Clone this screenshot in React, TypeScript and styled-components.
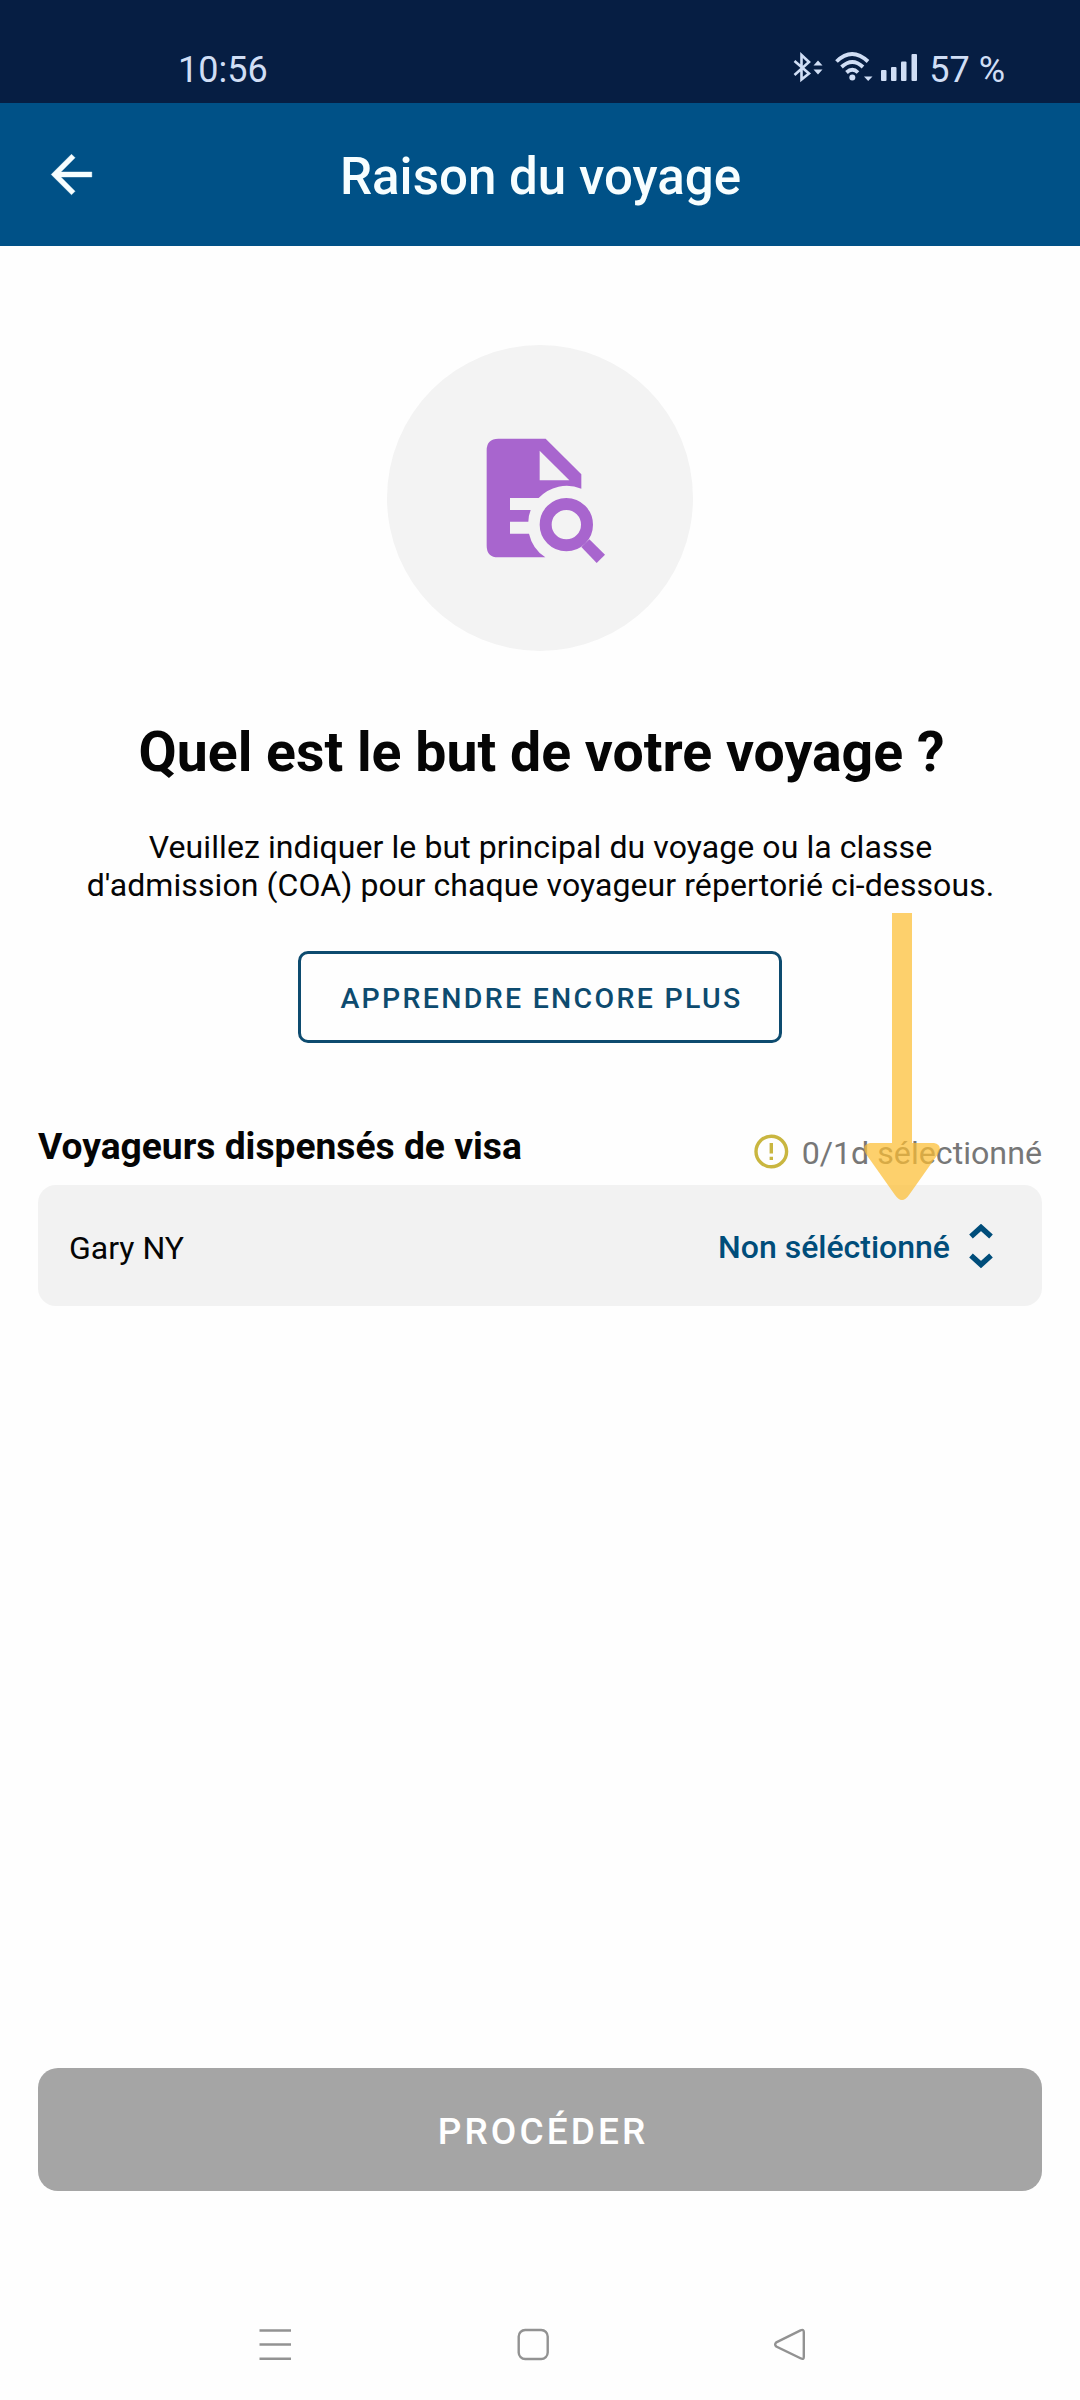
import React from 'react';
import styled, { createGlobalStyle } from 'styled-components';

const GlobalStyle = createGlobalStyle`
  * { box-sizing: border-box; }
  html, body { margin: 0; padding: 0; background: #fff; }
  body { font-family: Roboto, "Noto Sans", sans-serif; color: #050505; }
  h1, h2, p { margin: 0; }
  button { font-family: inherit; cursor: pointer; }
  svg { display: block; flex: none; }
`;

const Screen = styled.div`
  display: flex;
  flex-direction: column;
  width: 1080px;
  height: 2400px;
  overflow: hidden;
  background: #fefefe;
`;

const StatusBar = styled.div`
  display: flex;
  justify-content: space-between;
  height: 103px;
  padding: 49px 75px 0 178px;
  background: #061e43;
  color: #d0def5;
  font-size: 36px;
  line-height: 42px;
`;

const StatusIcons = styled.div`
  display: flex;
  align-items: flex-start;
  gap: 12px;
`;

const Connectivity = styled.div`
  display: flex;
  align-items: flex-start;
  gap: 11px;
  margin-right: -4px;
`;

const Header = styled.header`
  display: grid;
  grid-template-columns: 102px 1fr 102px;
  align-items: center;
  height: 143px;
  background: #005187;
  color: #f7feff;
`;

const BackButton = styled.button`
  display: flex;
  padding: 0;
  margin-left: 41px;
  border: 0;
  background: none;
  color: inherit;
`;

const Title = styled.h1`
  padding: 4px 0 0 1px;
  text-align: center;
  font-size: 51.1px;
  line-height: 60px;
  font-weight: 500;
  white-space: nowrap;
`;

const Main = styled.main`
  display: flex;
  flex-direction: column;
  flex: 1;
  align-items: center;
  padding: 99px 38px 0;
`;

const Question = styled.h2`
  margin-top: 70px;
  padding-left: 3px;
  font-size: 55.4px;
  line-height: 64px;
  font-weight: 700;
  white-space: nowrap;
`;

const Description = styled.p`
  margin-top: 43px;
  padding-left: 1px;
  text-align: center;
  font-size: 32px;
  line-height: 38px;
  letter-spacing: 0.08px;
  white-space: nowrap;
`;

const LearnMore = styled.button`
  width: 484px;
  height: 92px;
  margin-top: 47px;
  padding: 3px 0 0 3px;
  border: 3px solid #0d4b6f;
  border-radius: 10px;
  background: #fefefe;
  color: #0d4b6f;
  font-size: 28.5px;
  font-weight: 500;
  letter-spacing: 2.3px;
  white-space: nowrap;
`;

const Section = styled.section`
  position: relative;
  align-self: stretch;
  margin-top: 80px;
`;

const SectionHead = styled.div`
  display: flex;
  justify-content: space-between;
  height: 62px;
`;

const SectionTitle = styled.h2`
  font-size: 37.2px;
  line-height: 47px;
  font-weight: 700;
  white-space: nowrap;
`;

const Counter = styled.div`
  display: flex;
  gap: 13px;
  padding-top: 11px;
  color: #777;
  font-size: 32.2px;
  line-height: 38px;
  white-space: nowrap;
`;

const TravelerCard = styled.div`
  display: flex;
  align-items: center;
  justify-content: space-between;
  height: 121px;
  padding: 5px 49px 0 31px;
  border-radius: 18px;
  background: #f2f2f2;
  font-size: 32px;
  line-height: 38px;
`;

const Selector = styled.button`
  display: flex;
  align-items: center;
  gap: 19px;
  padding: 0 0 3px;
  border: 0;
  background: none;
  color: #004d7a;
  font-size: 32px;
  line-height: 38px;
  font-weight: 500;
`;

const PointerArrow = styled.svg`
  position: absolute;
  left: 826px;
  top: -210px;
`;

const Footer = styled.footer`
  display: flex;
  padding: 0 38px;
`;

const Proceed = styled.button`
  flex: 1;
  height: 123px;
  padding: 4px 0 0 6px;
  border: 0;
  border-radius: 20px;
  background: #a5a5a5;
  color: #fff;
  font-size: 37px;
  font-weight: 500;
  letter-spacing: 3.1px;
`;

const NavBar = styled.nav`
  display: flex;
  justify-content: space-between;
  height: 209px;
  padding: 137px 274px 0 259px;
`;

const Bluetooth = () => (
  <svg width="31" height="34" viewBox="0 0 31 34" fill="none" stroke="currentColor" strokeWidth="2.6">
    <path d="M1.5 12 L16 24.5 L8.5 30.5 V6 L16 13 L1.5 26" />
    <path d="M20.5 16.5 L25 11.5 L29.5 16.5Z M20.5 20.5 L25 25.5 L29.5 20.5Z" fill="currentColor" stroke="none" />
  </svg>
);

const Wifi = () => (
  <svg width="38" height="32" viewBox="0 0 38 32" fill="none" stroke="currentColor" strokeWidth="3.8">
    <path d="M1.5 12.5 Q17 -2.5 33 12.5 M6.5 18 Q17.3 8 28 18 M11.5 23.5 Q17.3 18 23 23.5" />
    <circle cx="17.3" cy="28.5" r="3" fill="currentColor" stroke="none" />
    <path d="M29 27.5 H37.5 L33.2 32Z" fill="currentColor" stroke="none" />
  </svg>
);

const Signal = () => (
  <svg width="36" height="32" viewBox="0 0 36 32" fill="currentColor">
    <rect x="0" y="21" width="5.5" height="11" rx="1" />
    <rect x="10" y="18" width="5.5" height="14" rx="1" />
    <rect x="20" y="12.5" width="5.5" height="19.5" rx="1" />
    <rect x="30.5" y="5" width="5.5" height="27" rx="1" />
  </svg>
);

const BackIcon = () => (
  <svg width="61" height="61" viewBox="0 0 24 24" fill="currentColor" stroke="currentColor" strokeWidth="0.15">
    <path d="M20 11H7.83l5.59-5.59L12 4l-8 8 8 8 1.41-1.41L7.83 13H20v-2z" />
  </svg>
);

const DocumentSearch = () => (
  <svg width="306" height="306" viewBox="52 44 918 918">
    <circle cx="511" cy="503" r="459" fill="#f3f3f3" />
    <path
      fill="#a865ce"
      fillRule="evenodd"
      d="M386 325H528L635 432V475A115 115 0 0 0 507 503H421V539H483Q476 557 476 574H421V610H478A115 115 0 0 0 527 681H386Q351 681 351 646V360Q351 325 386 325ZM510 361V450H599Z"
    />
    <circle cx="590" cy="583" r="62" fill="none" stroke="#a865ce" strokeWidth="36" />
    <path d="M635 650L659 627L706 673L681 698Z" fill="#a865ce" />
  </svg>
);

const Warning = () => (
  <svg width="35" height="35" viewBox="0 0 35 35" fill="none" stroke="#c9b640" strokeWidth="3.4">
    <circle cx="17.3" cy="17.5" r="15.3" />
    <path d="M17.3 9V19.5M17.3 22.7V26" />
  </svg>
);

const Chevrons = () => (
  <svg width="24" height="46" viewBox="0 0 24 46" fill="none" stroke="currentColor" strokeWidth="5.4">
    <path d="M2 12.5L12 3.4L22 12.5M2 31.5L12 40.6L22 31.5" />
  </svg>
);

const MenuIcon = () => (
  <svg width="32" height="34" viewBox="0 0 32 34" stroke="#929292" strokeWidth="2.6">
    <path d="M0.5 2.5H32M0.5 16.5H32M0.5 30.7H32" />
  </svg>
);

const HomeIcon = () => (
  <svg width="32" height="34" viewBox="0 0 32 34" fill="none" stroke="#929292" strokeWidth="2.4">
    <rect x="1.7" y="2" width="29" height="29" rx="6.5" />
  </svg>
);

const PreviousIcon = () => (
  <svg width="32" height="34" viewBox="0 0 32 34" fill="none" stroke="#929292" strokeWidth="2.4">
    <path d="M2.3 14.3L26.5 2.3Q29.8 1 29.8 4V29Q29.8 32 26.5 30.3L2.3 18.5Q0 16.5 2.3 14.3Z" />
  </svg>
);

export default function App() {
  return (
    <Screen>
      <GlobalStyle />
      <StatusBar>
        <span>10:56</span>
        <StatusIcons>
          <Connectivity>
            <Bluetooth />
            <Wifi />
          </Connectivity>
          <Signal />
          <span>57 %</span>
        </StatusIcons>
      </StatusBar>
      <Header>
        <BackButton aria-label="Retour"><BackIcon /></BackButton>
        <Title>Raison du voyage</Title>
      </Header>
      <Main>
        <DocumentSearch />
        <Question>Quel est le but de votre voyage ?</Question>
        <Description>
          Veuillez indiquer le but principal du voyage ou la classe
          <br />
          d'admission (COA) pour chaque voyageur répertorié ci-dessous.
        </Description>
        <LearnMore>APPRENDRE ENCORE PLUS</LearnMore>
        <Section>
          <SectionHead>
            <SectionTitle>Voyageurs dispensés de visa</SectionTitle>
            <Counter>
              <Warning />
              <span>0/1d sélectionné</span>
            </Counter>
          </SectionHead>
          <TravelerCard>
            <span>Gary NY</span>
            <Selector>
              <span>Non séléctionné</span>
              <Chevrons />
            </Selector>
          </TravelerCard>
          <PointerArrow width="76" height="288" viewBox="0 0 76 288">
            <path
              d="M28 0H48V230H70Q79 232 74 241L45 282Q38 292 31 282L2 241Q-3 232 6 230H28Z"
              fill="#fcbe33"
              fillOpacity="0.72"
            />
          </PointerArrow>
        </Section>
      </Main>
      <Footer><Proceed>PROCÉDER</Proceed></Footer>
      <NavBar>
        <MenuIcon />
        <HomeIcon />
        <PreviousIcon />
      </NavBar>
    </Screen>
  );
}
